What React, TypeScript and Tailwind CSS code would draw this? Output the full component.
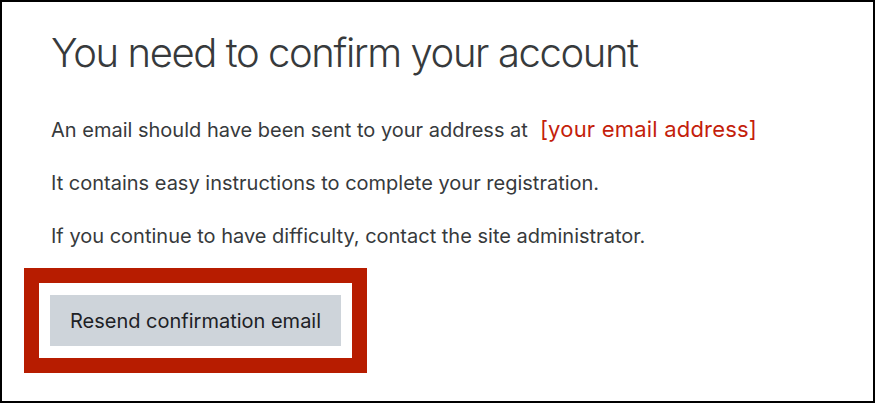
export default function App() {
  return (
    <div className="h-[403px] w-[875px] border-2 border-black bg-white pl-[22px] pt-[27px] font-['Inter',sans-serif]">
      <div className="pl-[27px]">
        <h1 className="text-[40px] font-light leading-[48px] tracking-[-1.4px] text-[#373a3c]">
          You need to confirm your account
        </h1>
        <p className="mt-[40px] flex items-baseline text-[20px] leading-[24px] text-[#373a3c]">
          An email should have been sent to your address at
          <span className="ml-[12px] text-[22px] leading-[24px] tracking-[0.2px] text-[#c41e0b]">[your email address]</span>
        </p>
        <p className="mt-[29px] text-[20px] leading-[24px] text-[#373a3c]">
          It contains easy instructions to complete your registration.
        </p>
        <p className="mt-[29px] text-[20px] leading-[24px] text-[#373a3c]">
          If you continue to have difficulty, contact the site administrator.
        </p>
      </div>
      <div className="mt-[20px] w-[343px] border-[15px] border-[#b71c00] bg-white px-[11px] py-[12px]">
        <button className="flex h-[51px] w-[291px] items-center justify-center bg-[#ced4da] text-[20px] text-[#1d2125]">
          Resend confirmation email
        </button>
      </div>
    </div>
  );
}
